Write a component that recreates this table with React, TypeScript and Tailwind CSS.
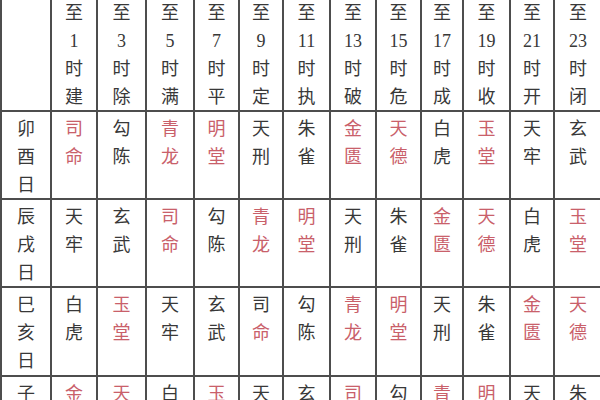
import { Fragment } from "react";

const HOURS = [
  { n: "1", c: "建" },
  { n: "3", c: "除" },
  { n: "5", c: "满" },
  { n: "7", c: "平" },
  { n: "9", c: "定" },
  { n: "11", c: "执" },
  { n: "13", c: "破" },
  { n: "15", c: "危" },
  { n: "17", c: "成" },
  { n: "19", c: "收" },
  { n: "21", c: "开" },
  { n: "23", c: "闭" },
];

type Cell = { t: string; red: boolean[] };
const c = (t: string, red: boolean | boolean[]): Cell => ({
  t,
  red: Array.isArray(red) ? red : [red, red],
});

const ROWS: { day: string; cells: Cell[] }[] = [
  {
    day: "卯酉日",
    cells: [
      c("司命", true), c("勾陈", false), c("青龙", true), c("明堂", true),
      c("天刑", false), c("朱雀", false), c("金匮", true), c("天德", true),
      c("白虎", false), c("玉堂", true), c("天牢", false), c("玄武", false),
    ],
  },
  {
    day: "辰戌日",
    cells: [
      c("天牢", false), c("玄武", false), c("司命", true), c("勾陈", false),
      c("青龙", true), c("明堂", true), c("天刑", false), c("朱雀", false),
      c("金匮", true), c("天德", true), c("白虎", false), c("玉堂", true),
    ],
  },
  {
    day: "巳亥日",
    cells: [
      c("白虎", false), c("玉堂", true), c("天牢", false), c("玄武", false),
      c("司命", [false, true]), c("勾陈", false), c("青龙", true), c("明堂", true),
      c("天刑", false), c("朱雀", false), c("金匮", true), c("天德", true),
    ],
  },
  {
    day: "子午日",
    cells: [
      c("金匮", true), c("天德", true), c("白虎", false), c("玉堂", true),
      c("天牢", false), c("玄武", false), c("司命", true), c("勾陈", false),
      c("青龙", true), c("明堂", true), c("天刑", false), c("朱雀", false),
    ],
  },
];

export default function App() {
  return (
    <div
      className="w-[600px] h-[400px] overflow-hidden bg-white text-[18px] leading-[28px] text-[#383838]"
      style={{ fontFamily: '"Liberation Serif", "Noto Sans CJK SC", serif' }}
    >
      <div className="grid w-[650px] grid-cols-[48px_44px_47px_46px_43px_42px_45px_44px_43px_40px_45px_42px_46px] grid-rows-[111px_86px_86px_87px_86px] gap-[2px] bg-[#4d4d4d] pl-[2px] -mt-px">
        <div className="bg-white" />
        {HOURS.map((h) => (
          <div key={h.n} className="flex flex-col items-center bg-white">
            <span>至</span>
            <span>{h.n}</span>
            <span>时</span>
            <span>{h.c}</span>
          </div>
        ))}
        {ROWS.map((row) => (
          <Fragment key={row.day}>
            <div className="flex flex-col items-center bg-white pt-[3px]">
              {row.day.split("").map((ch, i) => (
                <span key={i}>{ch}</span>
              ))}
            </div>
            {row.cells.map((cell, j) => (
              <div key={j} className="flex flex-col items-center bg-white pt-[3px]">
                {cell.t.split("").map((ch, i) => (
                  <span key={i} className={cell.red[i] ? "text-[#c9606a]" : "text-[#383838]"}>
                    {ch}
                  </span>
                ))}
              </div>
            ))}
          </Fragment>
        ))}
      </div>
    </div>
  );
}
